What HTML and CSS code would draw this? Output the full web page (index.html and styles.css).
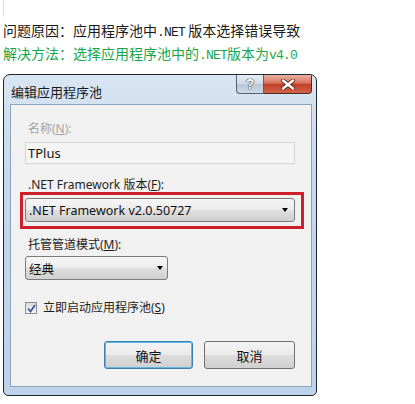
FILE: index.html
```html
<!DOCTYPE html>
<html lang="zh-CN">
<head>
    <meta charset="UTF-8">
    <title>编辑应用程序池</title>
    <link rel="stylesheet" href="styles.css">
</head>
<body>
    <div class="page">
        <div class="edge"></div>
        <p class="note note-cause">问题原因：应用程序池中<span class="mono">.NET</span> 版本选择错误导致</p>
        <p class="note note-fix">解决方法：选择应用程序池中的<span class="mono">.NET</span>版本为<span class="mono">v4.0</span></p>

        <div class="window">
            <div class="titlebar">
                <span class="title">编辑应用程序池</span>
                <div class="caption-btns">
                    <span class="cap cap-help">?</span>
                    <span class="cap cap-close">
                        <svg width="14" height="11" viewBox="0 0 14 11">
                            <path d="M2 1.5 L12 9.5 M12 1.5 L2 9.5" stroke="#5a2a22" stroke-width="4.2" stroke-linecap="round"/>
                            <path d="M2 1.5 L12 9.5 M12 1.5 L2 9.5" stroke="#fff" stroke-width="2.4" stroke-linecap="round"/>
                        </svg>
                    </span>
                </div>
            </div>

            <div class="client">
                <div class="field-label disabled">名称(<u>N</u>):</div>
                <div class="textbox">TPlus</div>

                <div class="field-label label-fw">.NET Framework 版本(<u>F</u>):</div>
                <div class="highlight">
                    <div class="combo">
                        <span>.NET Framework v2.0.50727</span>
                        <span class="arrow"></span>
                    </div>
                </div>

                <div class="field-label label-mode">托管管道模式(<u>M</u>):</div>
                <div class="combo combo-short">
                    <span>经典</span>
                    <span class="arrow"></span>
                </div>

                <div class="check-row">
                    <span class="checkbox">
                        <svg width="9" height="9" viewBox="0 0 9 9">
                            <path d="M1 4.5 L3.5 7.5 L8 1" fill="none" stroke="#3d5a9e" stroke-width="1.8"/>
                        </svg>
                    </span>
                    <span class="check-label">立即启动应用程序池(<u>S</u>)</span>
                </div>

                <div class="btn-row">
                    <span class="btn btn-default">确定</span>
                    <span class="btn btn-cancel">取消</span>
                </div>
            </div>
        </div>
    </div>
</body>
</html>
```

FILE: styles.css
```css
body {
    margin: 0;
    background: #fff;
    font-family: "Noto Sans CJK SC", sans-serif;
}
.page {
    padding-left: 3px;
}
.edge {
    height: 17px;
    border-left: 1px solid #e2e2e2;
}
.note {
    margin: 0;
    font-size: 14px;
    line-height: 20px;
    color: #1a1a1a;
    white-space: nowrap;
}
.note-cause {
    margin-top: 3px;
}
.note-fix {
    color: #17a74a;
}
.mono {
    font-family: "Liberation Mono", monospace;
    font-size: 13px;
    letter-spacing: -0.8px;
}

/* dialog window */
.window {
    margin-top: 8px;
    width: 314px;
    height: 322px;
    box-sizing: border-box;
    border: 1px solid #1e2833;
    border-radius: 7px 7px 5px 5px;
    background: linear-gradient(#d9e5f2, #c6d9ed 30%, #bdd3ea);
    display: flex;
    flex-direction: column;
    overflow: hidden;
}
.titlebar {
    height: 29px;
    flex: none;
    display: flex;
    justify-content: space-between;
    align-items: flex-start;
    padding-left: 7px;
}
.title {
    margin-top: 8px;
    font-size: 13px;
    line-height: 18px;
    color: #1b1b1b;
}
.caption-btns {
    display: flex;
    margin-right: 4px;
}
.cap {
    height: 19px;
    box-sizing: border-box;
    display: flex;
    align-items: center;
    justify-content: center;
}
.cap-help {
    width: 28px;
    border: 1px solid #56606e;
    border-top: none;
    border-radius: 0 0 0 4px;
    background: linear-gradient(#e6edf5, #cfdae7 50%, #b8c6d8 52%, #cdd9e7);
    color: #fff;
    font-family: "Liberation Sans", sans-serif;
    font-weight: bold;
    font-size: 14px;
    text-shadow: 0 0 1px #2d3440, 0 0 1px #2d3440, 0 0 1px #2d3440;
}
.cap-close {
    width: 48px;
    border: 1px solid #4d2a24;
    border-top: none;
    border-left: none;
    border-radius: 0 0 4px 0;
    background: linear-gradient(#eab0a3, #d8775f 45%, #c43f26 52%, #d1644b);
}

.client {
    height: 283px;
    box-sizing: border-box;
    margin: 0 4px 0 6px;
    border: 1px solid #8ea3bb;
    background: #f1f1f1;
    padding: 16px 16px 0 14px;
    font-family: "Noto Sans", "Noto Sans CJK SC", sans-serif;
    font-size: 12px;
    color: #1e1e1e;
}
.field-label {
    line-height: 16px;
    padding-left: 3px;
}
.field-label.disabled {
    color: #a5a5a5;
}
.textbox {
    margin-top: 5px;
    height: 22px;
    box-sizing: border-box;
    border: 1px solid #d6d6d6;
    background: #f4f4f4;
    padding-left: 2px;
    font-size: 13px;
    line-height: 20px;
    color: #111;
}
.label-fw {
    margin-top: 13px;
}
.highlight {
    margin: -1px -9px 0 -5px;
    border: 3px solid #cf1f28;
    padding: 3px 6px 4px 2px;
}
.combo {
    height: 24px;
    box-sizing: border-box;
    display: flex;
    align-items: center;
    justify-content: space-between;
    border: 1px solid #7b7b7b;
    border-radius: 3px;
    background: linear-gradient(#f6f6f6, #ececec 48%, #dedede 52%, #d0d0d0);
    padding: 0 6px 0 3px;
    font-size: 12.5px;
    color: #111;
}
.arrow {
    width: 0;
    height: 0;
    border-left: 3.5px solid transparent;
    border-right: 3.5px solid transparent;
    border-top: 4px solid #000;
}
.label-mode {
    margin-top: 8px;
}
.combo-short {
    margin-top: 3px;
    width: 143px;
    padding-right: 4px;
}
.check-row {
    margin-top: 20px;
    height: 16px;
    display: flex;
    align-items: center;
    gap: 6px;
}
.checkbox {
    width: 12px;
    height: 12px;
    box-sizing: border-box;
    border: 1px solid #8e8f8f;
    background: linear-gradient(#dcdcdc, #f8f8f8);
    display: flex;
    align-items: center;
    justify-content: center;
}
.check-label {
    line-height: 16px;
}
.btn-row {
    margin-top: 25px;
    display: flex;
    justify-content: flex-end;
    gap: 11px;
}
.btn {
    height: 28px;
    box-sizing: border-box;
    display: flex;
    align-items: center;
    justify-content: center;
    border: 1px solid #707070;
    border-radius: 3px;
    background: linear-gradient(#f3f3f3, #ebebeb 48%, #dddddd 52%, #cfcfcf);
    font-size: 13px;
    color: #111;
}
.btn-default {
    width: 89px;
    border-color: #3c7fb1;
    box-shadow: inset 0 0 0 1px #62b7e0;
}
.btn-cancel {
    width: 91px;
}
```
